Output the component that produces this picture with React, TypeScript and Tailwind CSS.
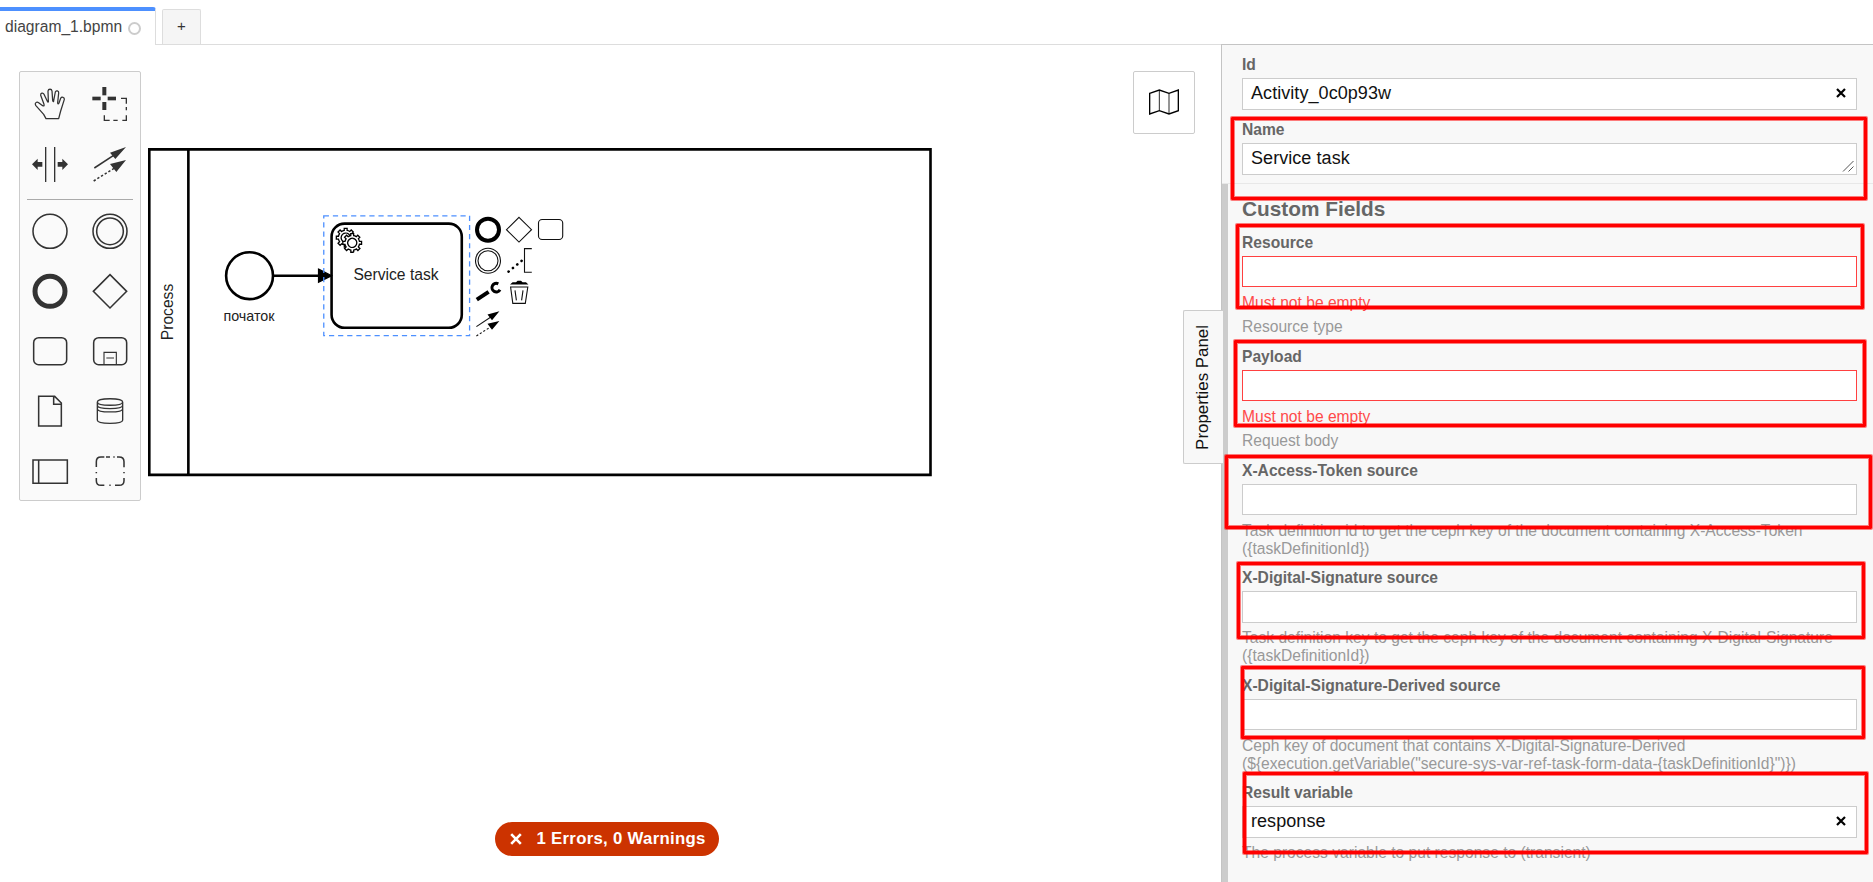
import React from "react";

const GEAR =
  "v -1.71335 c 0.352326,-0.0705 0.703932,-0.17838 1.047628,-0.32133 0.344416,-0.14465 0.665822,-0.32133 0.966377,-0.52145 l 1.19431,1.18005 1.567487,-1.57688 -1.195028,-1.18014 c 0.403376,-0.61394 0.683079,-1.29908 0.825447,-2.01824 l 1.622133,-0.01 v -2.2196 l -1.636514,0.01 c -0.07333,-0.35153 -0.178319,-0.70024 -0.323564,-1.04372 -0.145244,-0.34406 -0.321407,-0.6644 -0.522735,-0.96217 l 1.131035,-1.13631 -1.583305,-1.56293 -1.129598,1.13589 c -0.614052,-0.40108 -1.302883,-0.68093 -2.022633,-0.82247 l 0.0093,-1.61852 h -2.241173 l 0.0042,1.63124 c -0.353763,0.0736 -0.705369,0.17977 -1.049785,0.32371 -0.344415,0.14437 -0.665102,0.32092 -0.9635006,0.52006 l -1.1698628,-1.15823 -1.5667691,1.5792 1.1684265,1.15669 c -0.4026573,0.61283 -0.68308,1.29797 -0.8247287,2.01713 l -1.6588041,0.003 v 2.22174 l 1.6724648,-0.006 c 0.073327,0.35077 0.1797598,0.70243 0.3242851,1.04472 0.1452428,0.34448 0.3214064,0.6644 0.5227339,0.96066 l -1.1993431,1.19723 1.5840256,1.56011 1.1964668,-1.19348 c 0.6140517,0.40346 1.3028827,0.68232 2.0233517,0.82331 l 7.19e-4,1.69892 h 2.226848 z m 0.221462,-3.9957 c -1.788948,0.7502 -3.8576,-0.0928 -4.6097055,-1.87438 -0.7521065,-1.78321 0.090598,-3.84627 1.8802645,-4.59604 1.78823,-0.74936 3.856881,0.0929 4.608987,1.87437 0.752106,1.78165 -0.0906,3.84612 -1.879546,4.59605 z";

function Tool({ children }: { children: React.ReactNode }) {
  return (
    <button className="block size-[60px]">
      <svg viewBox="0 0 180 180" width="60" height="60" fill="none" stroke="#333" strokeWidth="4.6">
        {children}
      </svg>
    </button>
  );
}

function Palette() {
  return (
    <div className="absolute left-[19px] top-[26px] h-[430px] w-[122px] rounded-[2px] border border-[#ccc] bg-[#fafafa] pt-[2px]">
      <div className="grid grid-cols-2">
        <Tool>
          <path
            strokeLinejoin="round"
            strokeWidth="3.8"
            d="M78 134L71 121L47 94C43 87 50 82 56 86L68 95C72 97 73 95 72 91L62 64C61 57 69 55 72 61L82 82C84 86 86 84 85 80L84 51C85 44 95 44 96 51L98 79C99 84 101 84 101 80L106 54C108 48 117 50 116 57L113 86C113 91 115 91 117 87L122 73C125 67 134 70 133 76L122 111L116 134Z"
          />
        </Tool>
        <Tool>
          <g stroke="none" fill="#333">
            <rect x="67" y="39" width="12" height="25" />
            <rect x="67" y="84" width="12" height="24" />
            <rect x="37" y="68" width="25" height="11" />
            <rect x="83" y="68" width="25" height="11" />
          </g>
          <path strokeWidth="4" d="M123 73H139V89M139 99V109M139 124V139H127M113 139H100M89 139H73V124" />
        </Tool>
        <Tool>
          <path strokeWidth="4" d="M77 39V144M104 39V144" />
          <path fill="#333" stroke="none" d="M36 91L53 74V84H67V98H53V108ZM144 91L127 74V84H113V98H127V108Z" />
        </Tool>
        <Tool>
          <path d="M43 102L110 58" />
          <path strokeDasharray="7 6" d="M41 141L110 98" />
          <path fill="#333" stroke="none" d="M138 39L90 56L106 75ZM138 78L90 90L109 114Z" />
        </Tool>
      </div>
      <div className="mx-[7px] mb-px mt-[5px] h-px bg-[#aaa]" />
      <div className="grid grid-cols-2">
        <Tool>
          <circle cx="90" cy="91" r="51" />
        </Tool>
        <Tool>
          <circle cx="90" cy="91" r="51" />
          <circle cx="90" cy="91" r="40" />
        </Tool>
        <Tool>
          <circle cx="90" cy="91" r="45" strokeWidth="15" />
        </Tool>
        <Tool>
          <path d="M90 41L140 91L90 141L40 91Z" />
        </Tool>
        <Tool>
          <rect x="41" y="50" width="99" height="81" rx="15" />
        </Tool>
        <Tool>
          <rect x="41" y="50" width="99" height="81" rx="15" />
          <path strokeWidth="3.4" d="M72 131V94H109V131M79 111H102" />
        </Tool>
        <Tool>
          <path d="M56 46H104L124 66V135H56ZM101 46V70H124" />
        </Tool>
        <Tool>
          <path
            strokeWidth="4"
            d="M52 63C52 50 128 50 128 63V118C128 130 52 130 52 118ZM52 63C52 76 128 76 128 63M52 73C52 86 128 86 128 73M52 83C52 96 128 96 128 83"
          />
        </Tool>
        <Tool>
          <path d="M39 57H142V127H39ZM56 57V127" />
        </Tool>
        <Tool>
          <path d="M73 48H63Q49 48 49 62V78M49 93V97M49 111V119Q49 133 63 133H73M88 133H92M105 133H117Q132 133 132 119V111M132 97V93M132 79V62Q132 48 117 48H111M104 48H100M90 48H78" />
        </Tool>
      </div>
    </div>
  );
}

function Diagram() {
  return (
    <svg
      className="absolute left-0 top-0"
      width="1221"
      height="837"
      viewBox="0 45 1221 837"
      fill="none"
      fontFamily='"Liberation Sans", Arial, sans-serif'
    >
      <g transform="translate(149.3 149.4) scale(1.302)" stroke="#000" strokeWidth="2">
        <path d="M0 0H600V250H0ZM30 0V250" />
        <circle cx="77" cy="97" r="18" />
        <path d="M95 97H134" />
        <rect x="140" y="57" width="100" height="80" rx="10" fill="#fff" />
        <g transform="translate(140 57)" strokeWidth="1" fill="#fff">
          <path d={"m 12,18 " + GEAR} />
          <circle cx="16.1" cy="15.9" r="4" stroke="none" />
          <path d={"m 17,22 " + GEAR} />
        </g>
        <path d="M130 92L140 97L130 102Z" fill="#000" strokeWidth="1" />
        <rect x="134" y="51" width="112" height="92" stroke="#4d90ff" strokeWidth="1" strokeDasharray="4 3" />
      </g>
      <g fill="#222" textAnchor="middle">
        <text x="396" y="280" fontSize="15.65">Service task</text>
        <text x="249" y="321" fontSize="14.3">початок</text>
        <text transform="translate(172.5 312) rotate(-90)" fontSize="15.65">Process</text>
      </g>
      <g stroke="#111" strokeWidth="1.1">
        <circle cx="488" cy="229.7" r="11" strokeWidth="4" stroke="#000" />
        <path d="M519 217.3L531.5 229.7L519 242.1L506.5 229.7Z" />
        <rect x="538.5" y="219.5" width="24.2" height="20" rx="3.6" />
        <circle cx="488" cy="260.8" r="12.5" />
        <circle cx="488" cy="260.8" r="10" />
        <path d="M531.8 248.6H524.5V272.3H531.8" />
        <path d="M508.6 271.6L522 260.5" strokeWidth="2.6" strokeLinecap="round" strokeDasharray="0.1 5.5" stroke="#000" />
        <path d="M476.8 299.6L488.6 291.9" strokeWidth="4" stroke="#000" />
        <path d="M498.3 283.8A4.3 4.3 0 1 0 500 289.8" strokeWidth="3" stroke="#000" />
        <path d="M510 284.6L512.6 282.2H516L517.6 280.8H521L522.6 282.2H526L528.4 284.6Z" fill="#000" stroke="none" />
        <path d="M510.6 287H527.8L525.3 303.4H512.8ZM515 290.3L516.4 300.3M523 290.3L521.6 300.3" />
        <path d="M476.4 326.6L492 316.3" />
        <path d="M476.4 336L492 326" strokeDasharray="2.2 1.9" />
        <path d="M499.4 311.3L487.5 314.5L492 320.2ZM499.4 320.9L487.5 323.8L492 329.8Z" fill="#000" stroke="none" />
      </g>
    </svg>
  );
}

function Cross() {
  return (
    <svg width="10" height="10" viewBox="0 0 10 10" stroke="#000" strokeWidth="2.2">
      <path d="M1 1L9 9M9 1L1 9" />
    </svg>
  );
}

type FieldProps = {
  label: string;
  className: string;
  box?: string;
  value?: string;
  error?: string;
  help?: string[];
  clear?: boolean;
  grip?: boolean;
};

function Field({ label, className, box = "h-[31px] border-[#ccc]", value, error, help, clear, grip }: FieldProps) {
  return (
    <div className={className}>
      <div className="h-[18px] font-bold leading-[18px] text-[#666]">{label}</div>
      <div
        className={`mt-1 flex items-center justify-between border bg-white pl-2 pr-[10px] text-[18px] tracking-[0.06px] text-[#111] ${box}`}
      >
        <span className="pb-[2px]">{value}</span>
        {clear && (
          <span className="pb-[3px]">
            <Cross />
          </span>
        )}
        {grip && (
          <svg className="-mr-[8px] mb-[2px] self-end" width="12" height="12" viewBox="0 0 12 12" stroke="#555">
            <path d="M1 11.5L11.5 1M6.5 11.5L11.5 6.5" />
          </svg>
        )}
      </div>
      {error && <div className="mt-[7px] h-[17px] leading-[18px] text-[#ff4a4a]">{error}</div>}
      {help && (
        <div className={`leading-[18px] text-[#999] ${box.startsWith("h-[31px]") ? "mt-[7px]" : "mt-[6px]"}`}>
          {help.map((line) => (
            <div key={line}>{line}</div>
          ))}
        </div>
      )}
    </div>
  );
}

const MARK =
  "absolute rounded-[1px] border-[3px] border-[#f00] shadow-[0_0_0_1px_rgba(255,0,0,0.5),inset_0_0_0_1px_rgba(255,0,0,0.5)]";

export default function App() {
  return (
    <div className='relative flex h-[882px] w-full flex-col overflow-hidden bg-white font-["Liberation_Sans",Arial,sans-serif] text-[15.62px]'>
      <header className="flex h-[45px] items-end">
        <div className="flex h-[38px] w-[156px] items-center rounded-tr-[3px] border-r border-t-4 border-r-[#ddd] border-t-[#4d90ff] pb-[3px] pl-[5px] text-[#444]">
          <span>diagram_1.bpmn</span>
          <span className="ml-[6px] mt-[3px] size-[13px] rounded-full border-2 border-[#ccc]" />
        </div>
        <div className="flex h-full flex-1 items-end border-b border-[#ddd] pl-[6px]">
          <div className="flex h-[35px] w-[39px] items-center justify-center rounded-t-[2px] border border-b-0 border-[#ddd] bg-[#f5f5f5] pb-px text-[15px] text-[#333]">
            +
          </div>
        </div>
      </header>

      <main className="flex flex-1">
        <section className="relative flex-1">
          <Diagram />
          <Palette />
          <button className="absolute left-[1133px] top-[26px] flex h-[63px] w-[62px] items-center justify-center rounded-[2px] border border-[#ccc] bg-white pb-px">
            <svg width="30" height="26" viewBox="0 0 90 78" fill="none" stroke="#000" strokeWidth="4">
              <path d="M2 13L31 3L60 13L88 3V65L60 75L31 65L2 75Z" />
              <path strokeWidth="2.5" d="M31 3V65M60 13V75" />
            </svg>
          </button>
          <div className="absolute left-[495px] top-[777px] flex h-[34px] w-[224px] items-center rounded-full bg-[#cc3300] pl-[15px] text-[16.8px] font-bold tracking-[0.28px] text-white">
            <svg width="12" height="12" viewBox="0 0 12 12" stroke="#fff" strokeWidth="2.6">
              <path d="M1.2 1.2L10.8 10.8M10.8 1.2L1.2 10.8" />
            </svg>
            <span className="ml-[14.5px] whitespace-nowrap pb-px">1 Errors, 0 Warnings</span>
          </div>
        </section>

        <aside className="relative -mt-px flex w-[652px] flex-col border-l border-t border-[#c4c4c4] bg-[#f8f8f8]">
          <div className="h-[139px] border-b border-[#e8e8e8] pl-5 pr-4 pt-[11px]">
            <Field className="h-[65px]" label="Id" value="Activity_0c0p93w" clear box="h-[32px] border-[#ccc]" />
            <Field className="h-[60px]" label="Name" value="Service task" grip box="h-[32px] border-[#ccc]" />
          </div>
          <div className="flex-1 border-l-[6px] border-[#ccc] pl-[14px] pr-4">
            <h2 className="h-[50px] pt-[12px] text-[20.8px] font-bold leading-[26px] text-[#666]">Custom Fields</h2>
            <Field className="h-[114px]" label="Resource" box="h-[31px] border-[#ff4040]" error="Must not be empty" help={["Resource type"]} />
            <Field className="h-[114px]" label="Payload" box="h-[31px] border-[#ff4040]" error="Must not be empty" help={["Request body"]} />
            <Field
              className="h-[107px]"
              label="X-Access-Token source"
              help={["Task definition id to get the ceph key of the document containing X-Access-Token", "({taskDefinitionId})"]}
            />
            <Field
              className="h-[108px]"
              label="X-Digital-Signature source"
              box="h-[32px] border-[#ccc]"
              help={["Task definition key to get the ceph key of the document containing X-Digital-Signature", "({taskDefinitionId})"]}
            />
            <Field
              className="h-[107px]"
              label="X-Digital-Signature-Derived source"
              help={[
                "Ceph key of document that contains X-Digital-Signature-Derived",
                '(${execution.getVariable("secure-sys-var-ref-task-form-data-{taskDefinitionId}")})',
              ]}
            />
            <Field
              className="h-[80px]"
              label="Result variable"
              value="response"
              clear
              box="h-[32px] border-[#ccc]"
              help={["The process variable to put response to (transient)"]}
            />
          </div>
          <div className="absolute -left-[39px] top-[265px] flex h-[154px] w-[40px] items-center justify-center rounded-l-[2px] border border-r-0 border-[#ccc] bg-[#f8f8f8] pr-[2px]">
            <span className="rotate-180 text-[16.9px] leading-[20px] text-[#111] [writing-mode:vertical-rl]">Properties Panel</span>
          </div>
        </aside>
      </main>

      <div className={`${MARK} left-[1231px] top-[117px] h-[83px] w-[636px]`} />
      <div className={`${MARK} left-[1236px] top-[224px] h-[85px] w-[628px]`} />
      <div className={`${MARK} left-[1234px] top-[340px] h-[87px] w-[632px]`} />
      <div className={`${MARK} left-[1225px] top-[455px] h-[74px] w-[647px]`} />
      <div className={`${MARK} left-[1237px] top-[562px] h-[77px] w-[628px]`} />
      <div className={`${MARK} left-[1241px] top-[666px] h-[73px] w-[624px]`} />
      <div className={`${MARK} left-[1243px] top-[772px] h-[82px] w-[625px]`} />
    </div>
  );
}
